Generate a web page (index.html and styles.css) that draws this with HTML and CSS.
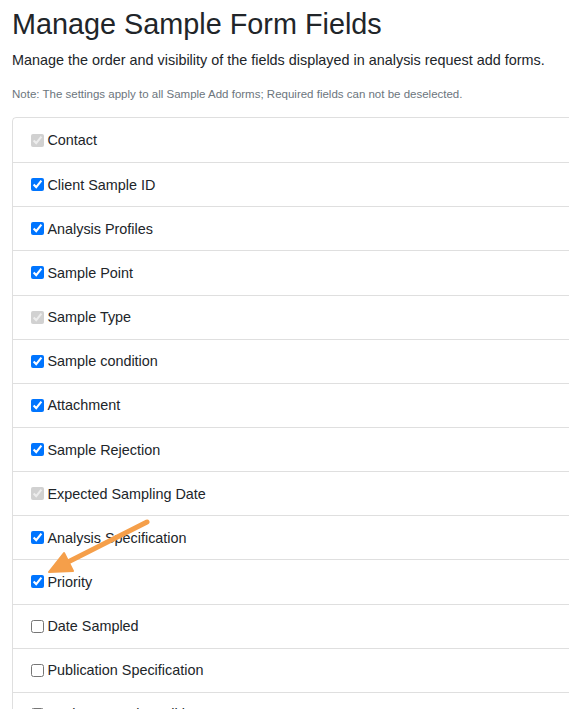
FILE: index.html
```html
<!DOCTYPE html>
<html>
<head>
<meta charset="utf-8">
<link rel="stylesheet" href="styles.css">
</head>
<body>
<div class="page">
  <h1 class="title">Manage Sample Form Fields</h1>
  <p class="lead">Manage the order and visibility of the fields displayed in analysis request add forms.</p>
  <p class="note">Note: The settings apply to all Sample Add forms; Required fields can not be deselected.</p>
  <ul class="fields">
    <li class="field"><input type="checkbox" checked disabled>Contact</li>
    <li class="field"><input type="checkbox" checked>Client Sample ID</li>
    <li class="field"><input type="checkbox" checked>Analysis Profiles</li>
    <li class="field"><input type="checkbox" checked>Sample Point</li>
    <li class="field"><input type="checkbox" checked disabled>Sample Type</li>
    <li class="field"><input type="checkbox" checked>Sample condition</li>
    <li class="field"><input type="checkbox" checked>Attachment</li>
    <li class="field"><input type="checkbox" checked>Sample Rejection</li>
    <li class="field"><input type="checkbox" checked disabled>Expected Sampling Date</li>
    <li class="field"><input type="checkbox" checked>Analysis Specification</li>
    <li class="field"><input type="checkbox" checked>Priority</li>
    <li class="field"><input type="checkbox">Date Sampled</li>
    <li class="field"><input type="checkbox">Publication Specification</li>
    <li class="field"><input type="checkbox">Environmental conditions</li>
  </ul>
  <svg class="arrow" width="120" height="70" viewBox="40 515 120 70">
    <line x1="147" y1="522" x2="66" y2="563" stroke="#f59f4a" stroke-width="5" stroke-linecap="round"/>
    <polygon points="49,572 64,553 73,571" fill="#f59f4a" stroke="#f59f4a" stroke-width="2" stroke-linejoin="round"/>
  </svg>
</div>
</body>
</html>
```
FILE: styles.css
```css
html, body {
  margin: 0;
  padding: 0;
  overflow: hidden;
  background: #fff;
}
.page {
  position: relative;
  padding: 0 12px;
  font-family: "Liberation Sans", Arial, sans-serif;
  color: #212529;
}
.title {
  margin: 0;
  padding-top: 7px;
  font-size: 28.8px;
  font-weight: 400;
  line-height: 34px;
}
.lead {
  margin: 9px 0 0;
  font-size: 14.4px;
  line-height: 21px;
}
.note {
  margin: 15px 0 0;
  font-size: 11.5px;
  line-height: 17px;
  color: #6c757d;
}
.fields {
  list-style: none;
  margin: 14px 0 0;
  padding: 0;
  width: 620px;
  border: 1px solid rgba(0,0,0,.125);
  border-radius: 4px;
}
.field {
  display: flex;
  align-items: center;
  height: 43.15px;
  padding: 0 14.4px;
  font-size: 14.4px;
  border-top: 1px solid rgba(0,0,0,.125);
}
.field:first-child {
  border-top: none;
  height: 44.15px;
}
.field input {
  margin: 3px 3px 3px 4px;
  width: 13px;
  height: 13px;
}
.arrow {
  position: absolute;
  left: 40px;
  top: 515px;
  pointer-events: none;
}
```
